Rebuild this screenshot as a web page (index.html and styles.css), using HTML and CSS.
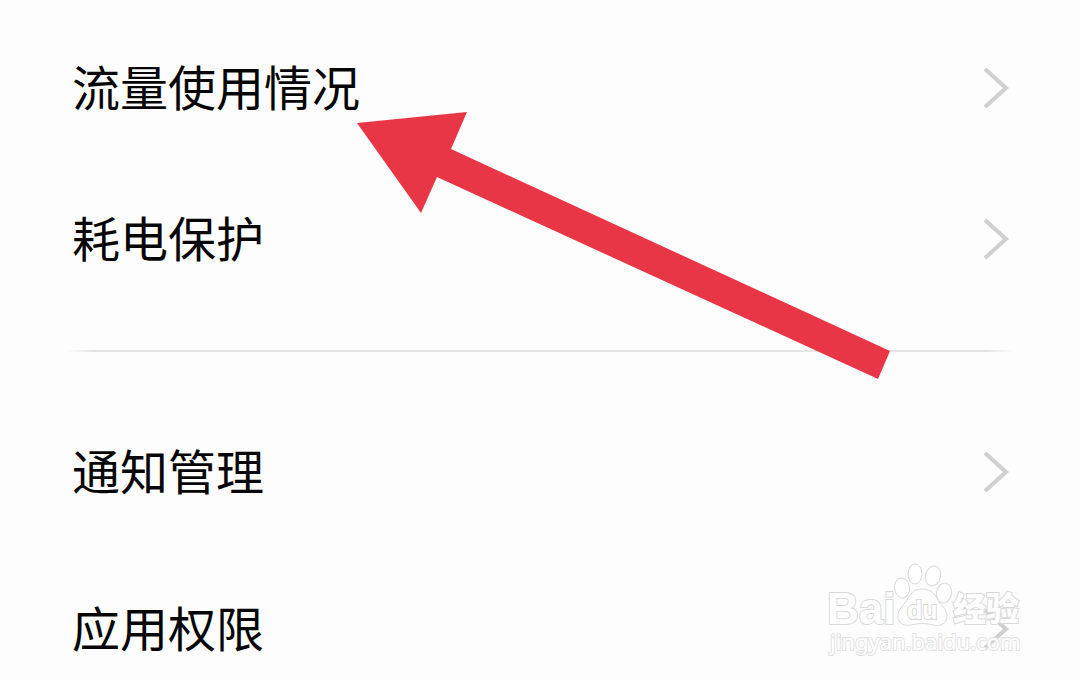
FILE: index.html
```html
<!DOCTYPE html>
<html lang="zh-CN">
<head>
<meta charset="utf-8">
<meta name="viewport" content="width=device-width, initial-scale=1">
<title>应用信息</title>
<link rel="stylesheet" href="styles.css">
</head>
<body>
<main class="settings">
  <nav class="group group-usage">
    <a class="row" href="#data"><span class="label">流量使用情况</span><svg class="chevron" viewBox="0 0 26 42" aria-hidden="true"><path d="M2 2L23 21L2 40"/></svg></a>
    <a class="row" href="#power"><span class="label">耗电保护</span><svg class="chevron" viewBox="0 0 26 42" aria-hidden="true"><path d="M2 2L23 21L2 40"/></svg></a>
  </nav>
  <hr class="divider">
  <nav class="group group-manage">
    <a class="row" href="#notifications"><span class="label">通知管理</span><svg class="chevron" viewBox="0 0 26 42" aria-hidden="true"><path d="M2 2L23 21L2 40"/></svg></a>
    <a class="row" href="#permissions"><span class="label">应用权限</span><svg class="chevron" viewBox="0 0 26 42" aria-hidden="true"><path d="M2 2L23 21L2 40"/></svg></a>
  </nav>
  <svg class="arrow" viewBox="0 0 534 268" aria-hidden="true"><path d="M0 11L110 0L94 37L533 239L521 267L80 65L64 101Z"/></svg>
  <svg class="watermark" viewBox="0 0 210 100" role="img" aria-label="Baidu经验">
    <text class="wm-brand" x="6" y="64">Bai</text>
    <ellipse cx="94" cy="14" rx="7" ry="10"/>
    <ellipse cx="112" cy="16" rx="7.500" ry="10" transform="rotate(14 112 16)"/>
    <ellipse cx="81" cy="28" rx="7.500" ry="10" transform="rotate(-8 81 28)"/>
    <ellipse cx="123" cy="33" rx="7.500" ry="10" transform="rotate(12 123 33)"/>
    <path d="M101 29C93 29 89 34 86 40C82 46 77 49 77 56C77 63 82 66 90 65C98 63 105 63 112 65C120 67 126 63 126 56C126 49 120 46 117 40C113 33 109 29 101 29Z"/>
    <text class="wm-du" x="86" y="59">du</text>
    <text class="wm-cjk" x="132" y="61">经验</text>
    <text class="wm-url" x="9" y="90">jingyan.baidu.com</text>
  </svg>
</main>
</body>
</html>
```
FILE: styles.css
```css
body {
  margin: 0;
  background: #fdfdfd;
  color: #060606;
  font-family: "Noto Sans CJK SC", sans-serif;
}

.settings {
  position: relative;
  padding: 38px 66px 0;
  overflow: hidden;
}

.group {
  display: flex;
  flex-direction: column;
}

.group-usage {
  gap: 51px;
}

.group-manage {
  gap: 57px;
}

.row {
  display: flex;
  align-items: center;
  justify-content: space-between;
  height: 100px;
  padding: 0 5px 0 6px;
  color: inherit;
  font-size: 48px;
  line-height: 72px;
  text-decoration: none;
}

.label {
  padding-bottom: 6px;
}

.chevron {
  width: 26px;
  height: 42px;
  fill: none;
  stroke: #d0d0d0;
  stroke-width: 4;
}

.divider {
  height: 2px;
  margin: 61px 0 70px;
  border: 0;
  background: linear-gradient(90deg, transparent, #e4e4e4 3%, #e4e4e4 97%, transparent);
}

.arrow {
  position: absolute;
  top: 112px;
  left: 357px;
  width: 534px;
  height: 268px;
  fill: #e93647;
}

.watermark {
  position: absolute;
  top: 560px;
  right: 49px;
  width: 210px;
  height: 100px;
  fill: #fff;
  stroke: #d9d9d9;
  stroke-width: 1;
}

.watermark text {
  stroke-width: 2;
  paint-order: stroke;
}

.wm-brand {
  font: bold 44px "Liberation Sans", sans-serif;
}

.wm-du {
  font: bold 25px "Liberation Sans", sans-serif;
}

.wm-cjk {
  font: 900 33px "Noto Sans CJK SC", sans-serif;
}

.wm-url {
  font: 22px "Noto Sans", sans-serif;
  stroke: #e2e2e2;
}
```
